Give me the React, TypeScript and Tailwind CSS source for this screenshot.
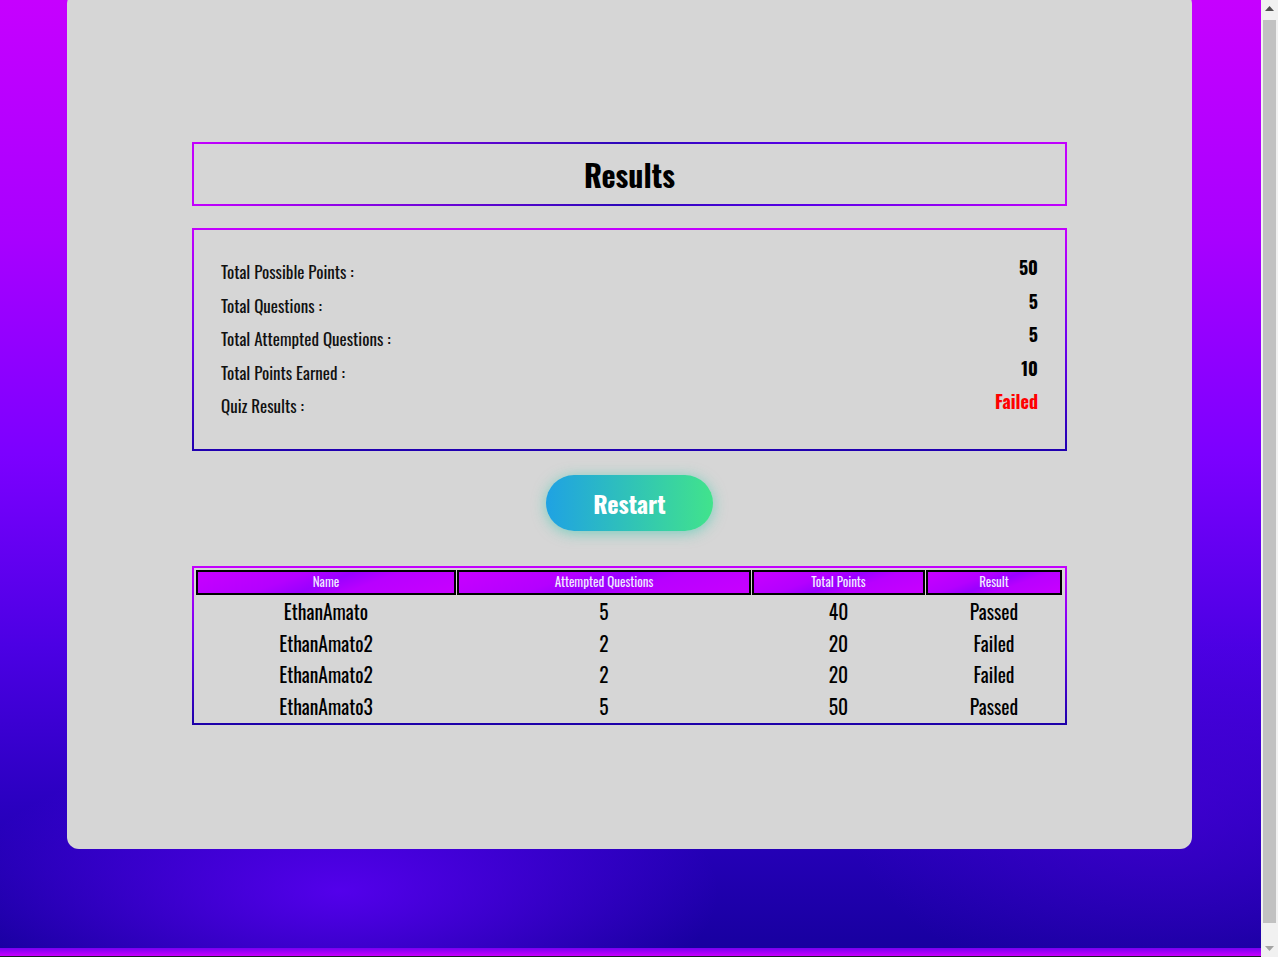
import React from "react";

const font = { fontFamily: '"Oswald", "Liberation Sans Narrow", "DejaVu Sans Condensed", sans-serif' };

const stats: { label: string; value: string; red?: boolean }[] = [
  { label: "Total Possible Points :", value: "50" },
  { label: "Total Questions :", value: "5" },
  { label: "Total Attempted Questions :", value: "5" },
  { label: "Total Points Earned :", value: "10" },
  { label: "Quiz Results :", value: "Failed", red: true },
];

const rows = [
  ["EthanAmato", "5", "40", "Passed"],
  ["EthanAmato2", "2", "20", "Failed"],
  ["EthanAmato2", "2", "20", "Failed"],
  ["EthanAmato3", "5", "50", "Passed"],
];

const headers = ["Name", "Attempted Questions", "Total Points", "Result"];

export default function App() {
  return (
    <div className="flex h-[957px] overflow-hidden" style={font}>
      <div className="flex min-w-0 flex-1 flex-col bg-black">
        <div className="h-[948px] overflow-hidden bg-[radial-gradient(ellipse_30%_16%_at_27%_94%,rgba(96,0,250,0.8),transparent),radial-gradient(ellipse_25%_20%_at_92%_85%,rgba(80,0,220,0.5),transparent),linear-gradient(to_bottom,#c600ff_0%,#a800ff_25%,#7c00ff_48%,#4c00e4_68%,#2a00c0_85%,#1800a0_100%)]">
          <div className="-mt-2 ml-[67px] flex h-[857px] w-[1125px] flex-col items-center rounded-xl bg-[#d6d6d6] pt-[150px]">
            {/* Title box */}
            <div className="w-[875px] bg-[linear-gradient(to_right,#c400ff,#2a08b8_50%,#5a00e8_70%,#c400ff)] p-[2px]">
              <div className="flex h-[60px] items-center justify-center bg-[#d6d6d6]">
                <h1 className="text-[30px] font-bold text-black">Results</h1>
              </div>
            </div>

            {/* Stats box */}
            <div className="mt-[22px] w-[875px] bg-[linear-gradient(to_bottom,#c400ff,#7000f0_50%,#2000b0)] p-[2px]">
              <div className="flex flex-col bg-[#d6d6d6] px-[27px] pb-[26px] pt-[25px]">
                {stats.map((s) => (
                  <div key={s.label} className="flex h-[33.5px] items-center justify-between">
                    <span className="text-[17px] text-[#111]">{s.label}</span>
                    <span className={`mb-2 text-[18px] font-bold ${s.red ? "text-[#ff0000]" : "text-black"}`}>{s.value}</span>
                  </div>
                ))}
              </div>
            </div>

            {/* Restart button */}
            <button className="mt-6 flex h-[56px] w-[167px] items-center justify-center rounded-full bg-[linear-gradient(to_right,#1fa2e3,#41e38c)] text-[24px] font-bold text-white shadow-[0_2px_14px_rgba(40,200,170,0.55)]">
              Restart
            </button>

            {/* Table */}
            <div className="mt-[35px] w-[875px] bg-[linear-gradient(to_bottom,#c400ff,#6a00f0_50%,#1c00a8)] p-[2px]">
              <div className="bg-[#d6d6d6] p-[2px]">
                <div className="grid grid-cols-[260px_294px_173px_136px] gap-x-px">
                  {headers.map((h) => (
                    <div
                      key={h}
                      className="flex h-[25px] items-center justify-center border-2 border-black bg-[linear-gradient(160deg,#c800ff_0%,#b400ff_35%,#9a00ff_50%,#b800ff_65%,#c800ff_100%)] text-[13px] text-[#f0e8ff]"
                    >
                      {h}
                    </div>
                  ))}
                  {rows.map((r, i) =>
                    r.map((c, j) => (
                      <div key={`${i}-${j}`} className="flex h-[31.5px] items-center justify-center pt-[3px] text-[19.5px] font-normal text-black">
                        {c}
                      </div>
                    ))
                  )}
                </div>
              </div>
            </div>
          </div>
        </div>
        <div className="h-[8px] bg-[linear-gradient(to_bottom,#7a00f0,#c800ff)]"></div>
        <div className="h-[1px] bg-[#1a1a2a]"></div>
      </div>

      {/* Scrollbar */}
      <div className="flex w-[17px] flex-col bg-[#f1f1f1]">
        <div className="flex h-[17px] items-center justify-center">
          <svg width="9" height="5" viewBox="0 0 9 5">
            <path d="M4.5 0 L9 5 L0 5 Z" fill="#505050" />
          </svg>
        </div>
        <div className="mx-[2px] mt-[3px] mb-[17px] flex-1 bg-[#c1c1c1]"></div>
        <div className="flex h-[17px] items-center justify-center">
          <svg width="9" height="5" viewBox="0 0 9 5">
            <path d="M0 0 L9 0 L4.5 5 Z" fill="#a3a3a3" />
          </svg>
        </div>
      </div>
    </div>
  );
}
